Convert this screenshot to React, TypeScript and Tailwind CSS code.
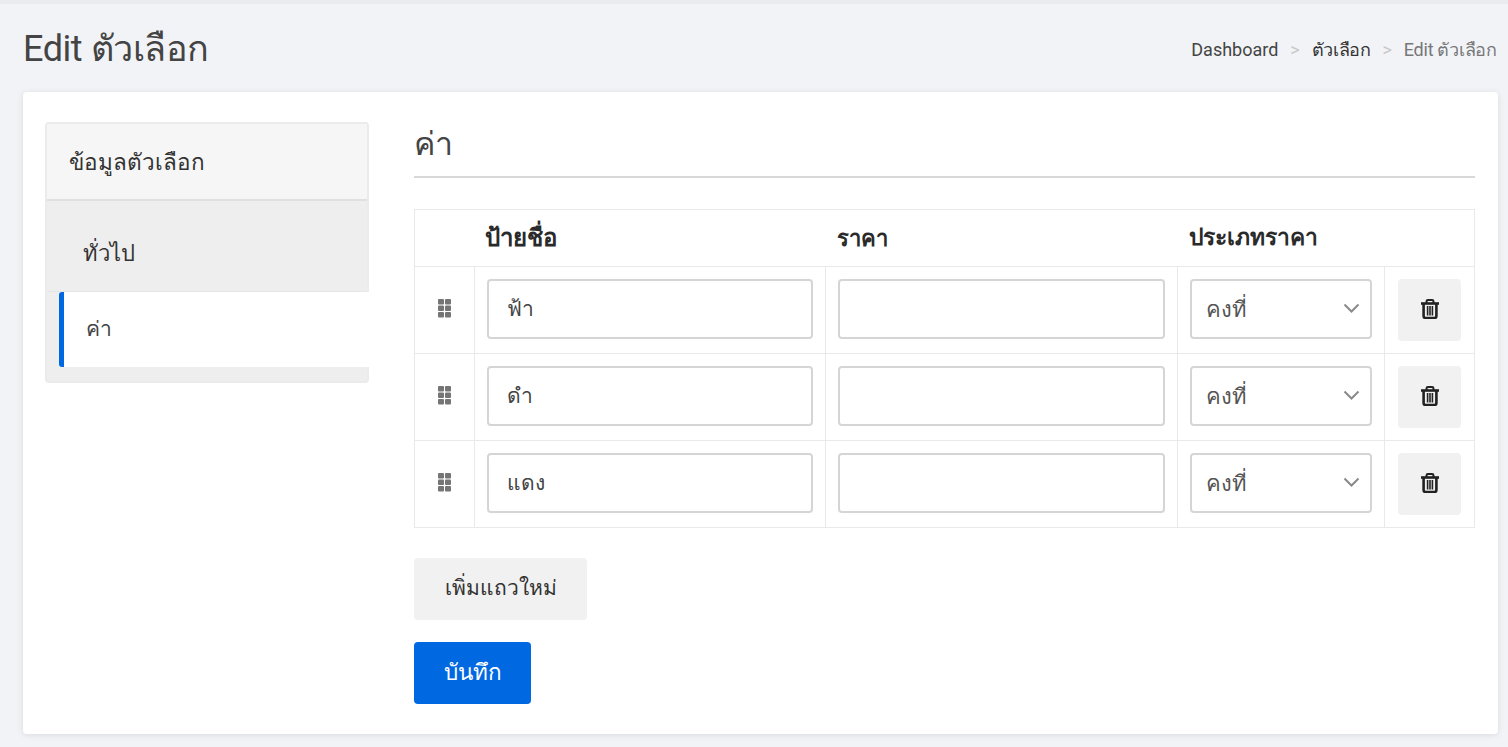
import React from 'react';

const rows = ['ฟ้า', 'ดำ', 'แดง'];

const Grip = () => (
  <svg width="13" height="19" viewBox="0 0 13 19" fill="#757575">
    <rect x="0" y="0" width="6" height="5.5" rx="1" />
    <rect x="7" y="0" width="6" height="5.5" rx="1" />
    <rect x="0" y="6.5" width="6" height="5.5" rx="1" />
    <rect x="7" y="6.5" width="6" height="5.5" rx="1" />
    <rect x="0" y="13" width="6" height="5.5" rx="1" />
    <rect x="7" y="13" width="6" height="5.5" rx="1" />
  </svg>
);

const Chevron = () => (
  <svg width="17" height="11" viewBox="0 0 17 11" fill="none" stroke="#8a8a8a" strokeWidth="2" className="absolute right-[10px] top-[22px]">
    <path d="M1.5 1.5 L8.5 8.5 L15.5 1.5" />
  </svg>
);

const Trash = () => (
  <svg width="20" height="20" viewBox="0 0 20 20" fill="none" stroke="#222" className="-mt-[2px]">
    <path d="M1 4.5 H19" strokeWidth="2.6" />
    <path d="M6.5 4 V2.4 Q6.5 1 8 1 H12 Q13.5 1 13.5 2.4 V4" strokeWidth="2" />
    <path d="M3.6 5 V17 Q3.6 19 5.6 19 H14.4 Q16.4 19 16.4 17 V5" strokeWidth="2.6" />
    <path d="M7.6 7 V16.5 M10 7 V16.5 M12.4 7 V16.5" strokeWidth="1.6" />
  </svg>
);

export default function App() {
  return (
    <div className="h-[747px] overflow-hidden bg-[#f1f3f7] border-t-[4px] border-[#e9ebee] font-['Roboto','Noto_Sans','DejaVu_Sans',sans-serif] text-[18px] text-[#444]">
      <div className="flex items-center justify-between h-[88px] pl-[23px] pr-[11px]">
        <h1 className="text-[36px] font-normal text-[#444] pt-[2px] tracking-[-0.45px]">Edit ตัวเลือก</h1>
        <div className="flex items-center text-[18px] pt-[2px]">
          <span className="text-[#444]">Dashboard</span>
          <span className="mx-[12px] text-[#c8c8c8]">&gt;</span>
          <span className="text-[#333] tracking-[-0.4px]">ตัวเลือก</span>
          <span className="mx-[12px] text-[#c8c8c8]">&gt;</span>
          <span className="text-[#777] tracking-[-0.25px]">Edit ตัวเลือก</span>
        </div>
      </div>

      <div className="ml-[23px] mr-[10px] h-[642px] bg-white rounded-[4px] shadow-[0_1px_6px_rgba(0,0,0,0.1)] pl-[22px] pr-[23px] pt-[30px] flex">
        <div className="w-[324px] h-[261px] shrink-0 bg-[#eeeeee] rounded-[4px] border-2 border-[#ebebeb]">
          <div className="h-[77px] bg-[#f6f6f6] border-b-2 border-[#e0e0e0] pl-[22px] pt-[3px] flex items-center text-[#333] text-[22.5px]">
            ข้อมูลตัวเลือก
          </div>
          <div className="h-[91px] pl-[36px] pt-[14px] flex items-center text-[22px] text-[#333] border-b border-[#e6e6e6]">ทั่วไป</div>
          <div className="ml-[12px] -mr-[2px] h-[75px] bg-white border-l-[5px] border-[#0068e1] rounded-l-[3px] pl-[22px] flex items-center text-[#444] text-[21px]">
            ค่า
          </div>
        </div>

        <div className="ml-[45px] w-[1061px]">
          <h3 className="text-[32px] font-normal text-[#444] h-[56px] border-b-2 border-[#d8d8d8] leading-[44px]">ค่า</h3>

          <table className="mt-[31px] w-[1060px] table-fixed border-collapse border border-[#e9e9e9]">
            <colgroup>
              <col className="w-[60px]" />
              <col className="w-[351px]" />
              <col className="w-[352px]" />
              <col className="w-[207px]" />
              <col className="w-[90px]" />
            </colgroup>
            <thead>
              <tr className="h-[57px] text-left text-[#2a2a2a] text-[22.8px]">
                <th />
                <th className="pl-[10px] font-bold text-[24px]">ป้ายชื่อ</th>
                <th className="pl-[11px] font-bold text-[22px]">ราคา</th>
                <th className="pl-[11px] pt-[1px] font-bold">ประเภทราคา</th>
                <th />
              </tr>
            </thead>
            <tbody>
              {rows.map((r) => (
                <tr key={r} className="h-[87px]">
                  <td className="border border-[#e9e9e9]">
                    <div className="flex justify-center -mt-[3px]"><Grip /></div>
                  </td>
                  <td className="border border-[#e9e9e9] px-[12px] pt-[12px] align-top">
                    <div className="h-[60px] border-2 border-[#d5d5d5] rounded-[4px] pl-[18px] pt-[2px] flex items-center text-[#444] text-[21px]">{r}</div>
                  </td>
                  <td className="border border-[#e9e9e9] px-[12px] pt-[12px] align-top">
                    <div className="h-[60px] border-2 border-[#d5d5d5] rounded-[4px]" />
                  </td>
                  <td className="border border-[#e9e9e9] px-[12px] pt-[12px] align-top">
                    <div className="relative h-[60px] border-2 border-[#d5d5d5] rounded-[4px] pl-[14px] flex items-center text-[#555] text-[22px]">
                      คงที่
                      <Chevron />
                    </div>
                  </td>
                  <td className="border border-[#e9e9e9] px-[13px]">
                    <button className="w-[63px] h-[62px] bg-[#f1f1f1] rounded-[4px] flex items-center justify-center">
                      <Trash />
                    </button>
                  </td>
                </tr>
              ))}
            </tbody>
          </table>

          <button className="block mt-[30px] w-[173px] h-[62px] bg-[#f1f1f1] rounded-[4px] text-[#333] text-[21px]">เพิ่มแถวใหม่</button>
          <button className="block mt-[22px] w-[117px] h-[62px] bg-[#0068e1] rounded-[4px] text-white text-[22.5px] font-medium">บันทึก</button>
        </div>
      </div>
    </div>
  );
}
